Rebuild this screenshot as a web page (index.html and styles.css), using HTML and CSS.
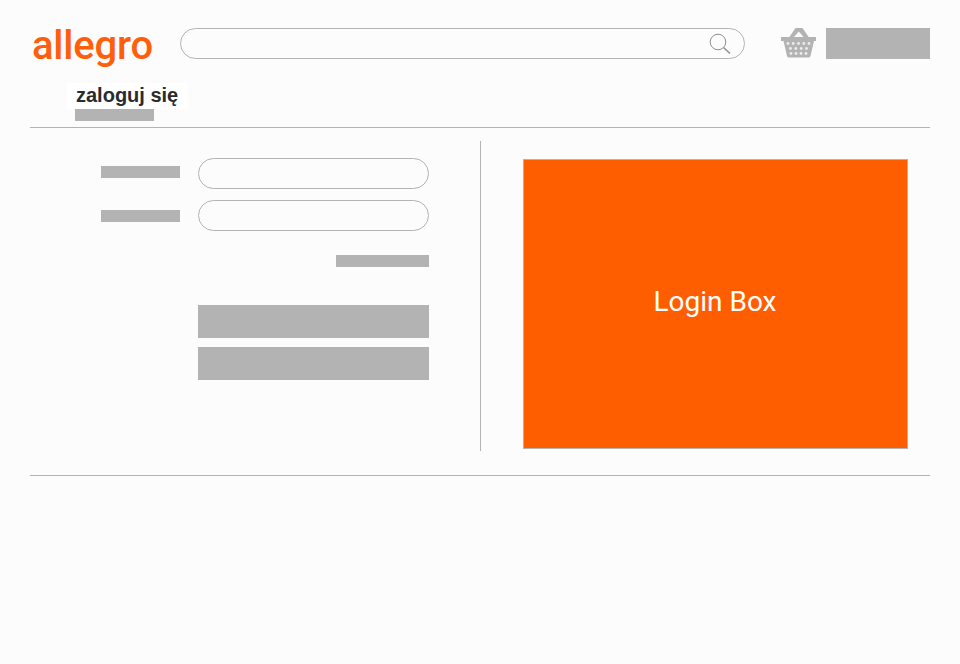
FILE: index.html
```html
<!DOCTYPE html>
<html lang="pl">
<head>
    <meta charset="UTF-8">
    <meta name="viewport" content="width=device-width, initial-scale=1.0">
    <title>Allegro - zaloguj się</title>
    <link rel="stylesheet" href="styles.css">
</head>
<body>
    <div class="container">
        <div class="header">
            <div class="logo">allegro</div>
            <div class="search">
                <svg class="search-icon" width="24" height="24" viewBox="0 0 24 24" fill="none">
                    <circle cx="10" cy="10" r="7.800" stroke="#8f8f8f" stroke-width="1"/>
                    <path d="M15.500 15.500L22 21.500" stroke="#8f8f8f" stroke-width="1.500"/>
                </svg>
            </div>
            <svg class="basket" width="36" height="32" viewBox="0 0 36 32">
                <path d="M9 9.500L15.500 0h7L29 9.500h-5L18.800 3.500 13.500 9.500z" fill="#b3b3b3"/>
                <path d="M1 9h35v4H34l-3.500 15q-.4 1.500-2 1.500H9q-1.600 0-2-1.500L3.500 13H1z" fill="#b3b3b3"/>
                <g fill="#ececec">
                    <circle cx="8" cy="15.500" r="1.400"/><circle cx="13.200" cy="15.500" r="1.400"/><circle cx="18.500" cy="15.500" r="1.400"/><circle cx="23.800" cy="15.500" r="1.400"/><circle cx="29" cy="15.500" r="1.400"/>
                    <circle cx="10.500" cy="20.500" r="1.400"/><circle cx="15.800" cy="20.500" r="1.400"/><circle cx="21.200" cy="20.500" r="1.400"/><circle cx="26.500" cy="20.500" r="1.400"/>
                    <circle cx="11" cy="25.500" r="1.400"/><circle cx="16" cy="25.500" r="1.400"/><circle cx="21" cy="25.500" r="1.400"/><circle cx="26" cy="25.500" r="1.400"/>
                </g>
            </svg>
            <div class="cart-box"></div>
        </div>

        <div class="tab-area">
            <div class="tab-title">zaloguj się</div>
            <div class="bar tab-bar"></div>
        </div>

        <div class="main">
            <div class="form-side">
                <div class="form-row">
                    <div class="bar label-bar"></div>
                    <div class="input"></div>
                </div>
                <div class="form-row">
                    <div class="bar label-bar"></div>
                    <div class="input"></div>
                </div>
                <div class="bar forgot-bar"></div>
                <div class="bar btn"></div>
                <div class="bar btn"></div>
            </div>
            <div class="box-side">
                <div class="login-box">Login Box</div>
            </div>
        </div>
    </div>
</body>
</html>
```

FILE: styles.css
```css
html, body {
    margin: 0;
    padding: 0;
}
body {
    background: #fcfcfc;
    font-family: "Liberation Sans", Arial, sans-serif;
}
.container {
    width: 900px;
    margin-left: 30px;
}
.bar {
    background: #b3b3b3;
}
.header {
    display: flex;
    align-items: flex-start;
    padding-top: 28px;
    height: 55px;
}
.logo {
    width: 150px;
    margin-top: -11px;
    padding-left: 2px;
    box-sizing: border-box;
    font-family: Roboto, sans-serif;
    font-size: 40px;
    font-weight: 500;
    line-height: 58px;
    letter-spacing: -0.2px;
    color: #ff5f0a;
}
.search {
    width: 565px;
    height: 31px;
    box-sizing: border-box;
    border: 1px solid #b3b3b3;
    border-radius: 16px;
    display: flex;
    justify-content: flex-end;
    align-items: center;
    padding-right: 12px;
}
.search-icon {
    display: block;
}
.basket {
    display: block;
    margin-left: 35px;
}
.cart-box {
    width: 104px;
    height: 31px;
    margin-left: 10px;
    background: #b3b3b3;
}
.tab-area {
    height: 44px;
    border-bottom: 1px solid #b3b3b3;
}
.tab-title {
    width: 120px;
    height: 26px;
    margin-left: 37px;
    box-sizing: border-box;
    padding-left: 9px;
    background: #fff;
    color: #2b2b2b;
    font-size: 20px;
    font-weight: bold;
    line-height: 25px;
}
.tab-bar {
    width: 79px;
    height: 12px;
    margin-left: 45px;
}
.main {
    display: flex;
    padding-top: 13px;
    height: 334px;
    border-bottom: 1px solid #b3b3b3;
}
.form-side {
    width: 451px;
    height: 310px;
    box-sizing: border-box;
    border-right: 1px solid #b3b3b3;
    padding-top: 17px;
}
.form-row {
    display: flex;
    align-items: flex-start;
    margin-bottom: 11px;
    padding-left: 71px;
}
.label-bar {
    width: 79px;
    height: 12px;
    margin-top: 8px;
    margin-right: 18px;
}
.form-row + .form-row .label-bar {
    margin-top: 10px;
}
.input {
    width: 231px;
    height: 31px;
    box-sizing: border-box;
    border: 1px solid #b3b3b3;
    border-radius: 16px;
}
.forgot-bar {
    width: 93px;
    height: 12px;
    margin: 24px 0 38px 306px;
}
.btn {
    width: 231px;
    height: 33px;
    margin: 0 0 9px 168px;
}
.box-side {
    padding: 18px 0 0 42px;
}
.login-box {
    width: 385px;
    height: 290px;
    box-sizing: border-box;
    padding-bottom: 6px;
    padding-right: 1px;
    background: #ff5e00;
    border: 1px solid #b3b3b3;
    display: flex;
    align-items: center;
    justify-content: center;
    color: #fff;
    font-family: Roboto, sans-serif;
    font-size: 28px;
}
```
